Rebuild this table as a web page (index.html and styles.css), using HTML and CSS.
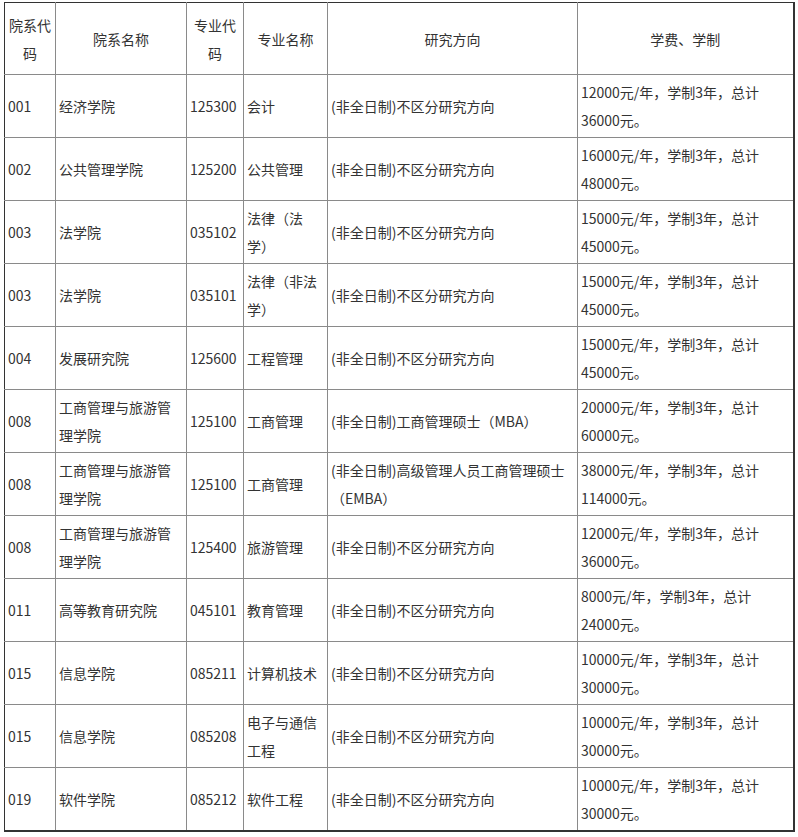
FILE: index.html
```html
<!DOCTYPE html>
<html lang="zh-CN">
<head>
<meta charset="utf-8">
<link rel="stylesheet" href="styles.css">
</head>
<body>
<table class="tbl">
<colgroup>
<col class="c1"><col class="c2"><col class="c3"><col class="c4"><col class="c5"><col class="c6">
</colgroup>
<thead>
<tr class="head">
<th>院系代码</th><th>院系名称</th><th>专业代码</th><th>专业名称</th><th>研究方向</th><th>学费、学制</th>
</tr>
</thead>
<tbody>
<tr><td>001</td><td>经济学院</td><td>125300</td><td>会计</td><td>(非全日制)不区分研究方向</td><td>12000元/年，学制3年，总计36000元。</td></tr>
<tr><td>002</td><td>公共管理学院</td><td>125200</td><td>公共管理</td><td>(非全日制)不区分研究方向</td><td>16000元/年，学制3年，总计48000元。</td></tr>
<tr><td>003</td><td>法学院</td><td>035102</td><td>法律（法学）</td><td>(非全日制)不区分研究方向</td><td>15000元/年，学制3年，总计45000元。</td></tr>
<tr><td>003</td><td>法学院</td><td>035101</td><td>法律（非法学）</td><td>(非全日制)不区分研究方向</td><td>15000元/年，学制3年，总计45000元。</td></tr>
<tr><td>004</td><td>发展研究院</td><td>125600</td><td>工程管理</td><td>(非全日制)不区分研究方向</td><td>15000元/年，学制3年，总计45000元。</td></tr>
<tr><td>008</td><td>工商管理与旅游管理学院</td><td>125100</td><td>工商管理</td><td>(非全日制)工商管理硕士（MBA）</td><td>20000元/年，学制3年，总计60000元。</td></tr>
<tr><td>008</td><td>工商管理与旅游管理学院</td><td>125100</td><td>工商管理</td><td>(非全日制)高级管理人员工商管理硕士（EMBA）</td><td>38000元/年，学制3年，总计114000元。</td></tr>
<tr><td>008</td><td>工商管理与旅游管理学院</td><td>125400</td><td>旅游管理</td><td>(非全日制)不区分研究方向</td><td>12000元/年，学制3年，总计36000元。</td></tr>
<tr><td>011</td><td>高等教育研究院</td><td>045101</td><td>教育管理</td><td>(非全日制)不区分研究方向</td><td>8000元/年，学制3年，总计24000元。</td></tr>
<tr><td>015</td><td>信息学院</td><td>085211</td><td>计算机技术</td><td>(非全日制)不区分研究方向</td><td>10000元/年，学制3年，总计30000元。</td></tr>
<tr><td>015</td><td>信息学院</td><td>085208</td><td>电子与通信工程</td><td>(非全日制)不区分研究方向</td><td>10000元/年，学制3年，总计30000元。</td></tr>
<tr><td>019</td><td>软件学院</td><td>085212</td><td>软件工程</td><td>(非全日制)不区分研究方向</td><td>10000元/年，学制3年，总计30000元。</td></tr>
</tbody>
</table>
</body>
</html>
```
FILE: styles.css
```css
html, body {
  margin: 0;
  padding: 0;
  background: #ffffff;
}
body {
  padding: 2px 0 0 4px;
  font-family: "Noto Sans CJK SC", "Noto Sans", sans-serif;
  font-size: 14px;
  color: #333333;
  text-spacing-trim: space-all;
}
.tbl {
  border-collapse: collapse;
  table-layout: fixed;
  width: 790px;
  border-top: 1px solid #333333;
  border-left: 1px solid #333333;
  border-right: 2px solid #333333;
  border-bottom: 2px solid #333333;
}
.c1 { width: 51px; }
.c2 { width: 131px; }
.c3 { width: 57px; }
.c4 { width: 84px; }
.c5 { width: 250px; }
.c6 { width: 216px; }
.tbl th,
.tbl td {
  border: 1px solid #8a8a8a;
  padding: 0 3px;
  line-height: 28px;
  vertical-align: middle;
  word-break: normal;
  line-break: strict;
  text-spacing-trim: space-all;
}
.tbl th {
  font-weight: normal;
  text-align: center;
  height: 72px;
  box-sizing: border-box;
}
.tbl td {
  text-align: left;
  height: 62px;
}
.tbl tr > :first-child { border-left-color: #333333; }
.tbl tr > :last-child { border-right-color: #333333; }
.tbl thead tr > * { border-top-color: #333333; }
.tbl tbody tr:last-child > * { border-bottom-color: #333333; }
```
